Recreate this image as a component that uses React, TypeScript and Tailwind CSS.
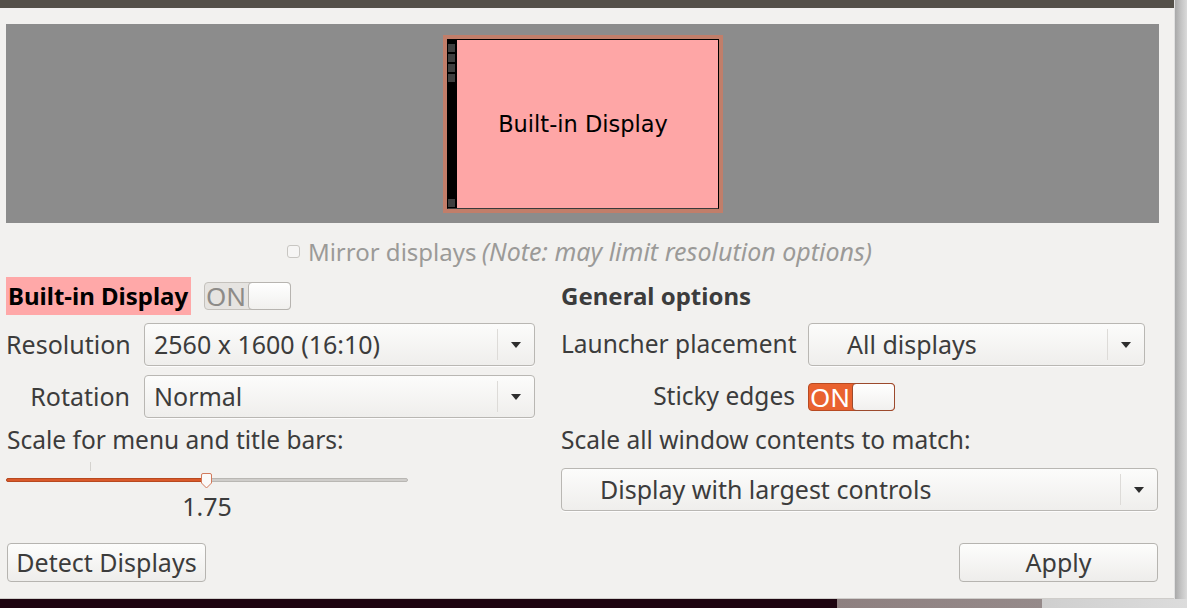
import React from "react";

const font = { fontFamily: '"Noto Sans", "Open Sans", sans-serif' };

function Combo({ text, width, pad }: { text: string; width: string; pad: string }) {
  return (
    <div
      className={`${width} h-[43px] flex items-center rounded-[4px] border border-[#b9b7b3] bg-gradient-to-b from-[#fcfcfb] to-[#efeeec] shadow-[0_1px_0_rgba(255,255,255,0.8)]`}
    >
      <span className={`flex-1 ${pad} text-[25px] text-[#3c3c3c] leading-none whitespace-nowrap`}>{text}</span>
      <div className="w-px h-[31px] bg-[#dddbd8]" />
      <div className="w-[36px] flex items-center justify-center">
        <svg width="10" height="6" viewBox="0 0 10 6">
          <path d="M0 0 L10 0 L5 6 Z" fill="#2e2e2e" />
        </svg>
      </div>
    </div>
  );
}

function Toggle({ on }: { on: boolean }) {
  return (
    <div
      className={`relative w-[87px] h-[28px] rounded-[4px] border flex items-center ${
        on ? "bg-[#e9622f] border-[#b84a22]" : "bg-[#e6e4e1] border-[#c4c1bc]"
      }`}
    >
      <span className={`pl-[1px] text-[26px] leading-none ${on ? "text-white" : "text-[#8d8b88]"}`}>ON</span>
      <div
        className={`absolute right-[-1px] top-[-1px] w-[43px] h-[28px] rounded-[4px] border bg-gradient-to-b from-white to-[#f1f0ee] ${
          on ? "border-[#9c4a2d]" : "border-[#b7b4b0]"
        }`}
      />
    </div>
  );
}

function Button({ label }: { label: string }) {
  return (
    <div className="w-[199px] h-[39px] flex items-center justify-center rounded-[4px] border border-[#b6b4b0] bg-gradient-to-b from-[#fdfdfc] to-[#eeedeb] text-[25px] text-[#3c3c3c] leading-none">
      {label}
    </div>
  );
}

export default function App() {
  return (
    <div className="w-[1187px] h-[608px] flex flex-col overflow-hidden bg-[#d0d0d0]" style={font}>
      <div className="flex flex-1">
        <div className="w-[1174px] flex flex-col">
          <div className="h-[8px] bg-[#545049]" />
          <div className="flex-1 bg-[#f2f1ef] border-b border-[#cfcdca] pt-[16px] pl-[6px] pr-[15px]">
            {/* display arrangement preview */}
            <div className="h-[199px] bg-[#8c8c8c] flex items-center justify-center">
              <div className="w-[280px] h-[178px] border-4 border-[#c17e6a] ml-[1px]">
                <div className="w-full h-full border border-black border-b-[#3a3a3a] flex">
                  <div className="w-[9px] bg-black flex flex-col pt-[4px] gap-[2px]">
                    <div className="w-[7px] h-[8px] bg-[#3f3f3f]" />
                    <div className="w-[7px] h-[8px] bg-[#3f3f3f]" />
                    <div className="w-[7px] h-[8px] bg-[#3f3f3f]" />
                    <div className="w-[7px] h-[8px] bg-[#3f3f3f]" />
                    <div className="flex-1" />
                    <div className="w-[7px] h-[8px] bg-[#3f3f3f] mb-[1px]" />
                  </div>
                  <div
                    className="flex-1 bg-[#fea6a6] flex items-center justify-center text-[22.5px] text-black pt-[2px] pr-[9px]"
                    style={{ fontFamily: '"DejaVu Sans", sans-serif' }}
                  >
                    Built-in Display
                  </div>
                </div>
              </div>
            </div>

            {/* mirror */}
            <div className="mt-[13px] h-[30px] flex items-center justify-center gap-[8px] ml-[-6px]">
              <div className="w-[13px] h-[13px] rounded-[3px] border border-[#c8c6c2] bg-[#f6f5f4]" />
              <span className="text-[24px] text-[#9b9a98] leading-none whitespace-nowrap">
                Mirror displays <i className="ml-[-1px] text-[25px]">(Note: may limit resolution options)</i>
              </span>
            </div>

            <div className="mt-[11px] grid grid-cols-[529px_597px] gap-x-[26px]">
              {/* left column */}
              <div className="flex flex-col">
                <div className="h-[38px] flex items-center">
                  <span className="h-[38px] w-[185px] bg-[#ffa8a8] flex items-center pl-[2px] text-[24px] font-bold text-black leading-none whitespace-nowrap">
                    Built-in Display
                  </span>
                  <div className="ml-[13px]">
                    <Toggle on={false} />
                  </div>
                </div>
                <div className="mt-[8px] h-[43px] flex items-center">
                  <span className="w-[124px] text-right text-[25px] text-[#3c3c3c] leading-none">Resolution</span>
                  <div className="ml-[14px]">
                    <Combo text="2560 x 1600 (16:10)" width="w-[391px]" pad="pl-[9px]" />
                  </div>
                </div>
                <div className="mt-[9px] h-[43px] flex items-center">
                  <span className="w-[124px] text-right text-[25px] text-[#3c3c3c] leading-none">Rotation</span>
                  <div className="ml-[14px]">
                    <Combo text="Normal" width="w-[391px]" pad="pl-[9px]" />
                  </div>
                </div>
                <div className="mt-[7px] h-[30px] flex items-center pl-[1px] text-[24.5px] text-[#3c3c3c] leading-none whitespace-nowrap">
                  Scale for menu and title bars:
                </div>
                <svg width="402" height="36" viewBox="0 0 402 36" className="block">
                  <line x1="84.5" y1="7" x2="84.5" y2="16" stroke="#d4d2ce" strokeWidth="1" />
                  <rect x="0.5" y="23.5" width="401" height="3" rx="1.5" fill="#cfcdca" stroke="#b9b7b3" strokeWidth="1" />
                  <rect x="0.5" y="23.5" width="200" height="3" rx="1.5" fill="#d9592a" stroke="#b8491f" strokeWidth="1" />
                  <path
                    d="M195.5 20 Q195.5 18.5 197 18.5 L204 18.5 Q205.5 18.5 205.5 20 L205.5 28 L200.5 33 L195.5 28 Z"
                    fill="#fbfaf9"
                    stroke="#d27a5c"
                    strokeWidth="1"
                  />
                </svg>
                <div className="w-[402px] h-[30px] flex items-center justify-center text-[25px] text-[#3c3c3c] leading-none">
                  1.75
                </div>
              </div>

              {/* right column */}
              <div className="flex flex-col">
                <div className="h-[38px] flex items-center text-[24px] font-bold text-[#3c3c3c] leading-none">
                  General options
                </div>
                <div className="mt-[8px] h-[43px] flex items-center">
                  <span className="w-[234px] text-right text-[24.5px] text-[#3c3c3c] leading-none whitespace-nowrap">
                    Launcher placement
                  </span>
                  <div className="ml-[13px]">
                    <Combo text="All displays" width="w-[337px]" pad="pl-[38px]" />
                  </div>
                </div>
                <div className="mt-[9px] h-[43px] flex items-center">
                  <span className="w-[234px] text-right text-[24.5px] text-[#3c3c3c] leading-none">Sticky edges</span>
                  <div className="ml-[13px]">
                    <Toggle on={true} />
                  </div>
                </div>
                <div className="mt-[7px] h-[30px] flex items-center text-[24.5px] text-[#3c3c3c] leading-none whitespace-nowrap">
                  Scale all window contents to match:
                </div>
                <div className="mt-[13px]">
                  <Combo text="Display with largest controls" width="w-[597px]" pad="pl-[38px]" />
                </div>
              </div>
            </div>

            <div className="mt-[22px] flex justify-between pl-[1px] pr-[1px]">
              <Button label="Detect Displays" />
              <Button label="Apply" />
            </div>
          </div>
        </div>
        <div className="flex-1 bg-gradient-to-r from-[#a9a9a9] via-[#c4c4c4] to-[#dadada] border-l border-[#e0e0e0]" />
      </div>
      <div className="h-[9px] flex">
        <div className="w-[837px] bg-[#1e0510]" />
        <div className="w-[205px] bg-gradient-to-r from-[#8e8080] to-[#958a8a]" />
        <div className="flex-1 bg-gradient-to-r from-[#cfcfcf] to-[#dcdcdc]" />
      </div>
    </div>
  );
}
